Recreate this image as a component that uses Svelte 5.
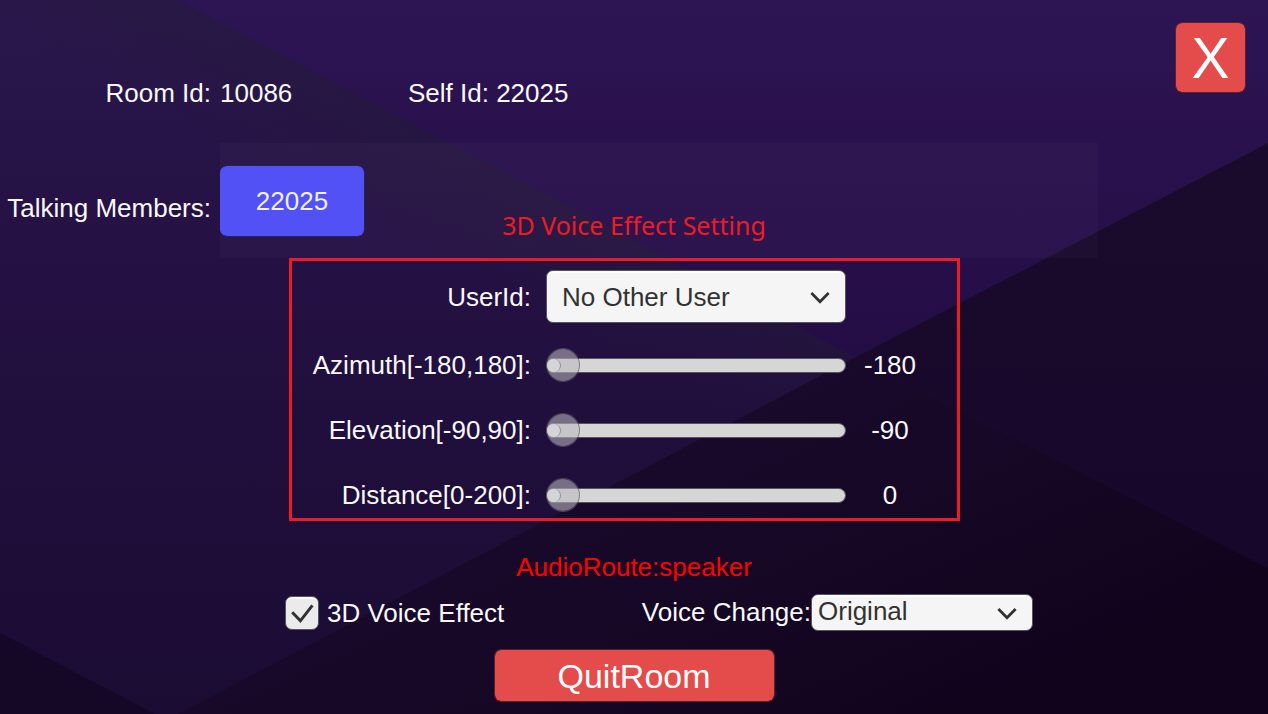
<script>
  const users = ['No Other User'];
  const voices = ['Original', 'Lolita', 'Uncle', 'Ethereal'];

  let user = $state('No Other User');
  let voice = $state('Original');
  let spatial = $state(true);
  let sliders = $state([
    { id: 'azimuth', label: 'Azimuth[-180,180]:', min: -180, max: 180, value: -180 },
    { id: 'elevation', label: 'Elevation[-90,90]:', min: -90, max: 90, value: -90 },
    { id: 'distance', label: 'Distance[0-200]:', min: 0, max: 200, value: 0 }
  ]);

  const share = (s) => (s.value - s.min) / (s.max - s.min);
</script>

{#snippet chevron()}
  <svg class="chevron" viewBox="0 0 20 14" aria-hidden="true">
    <path d="M1.4 2 L10 10.8 L18.6 2" fill="none" stroke="#323232" stroke-width="2.8" />
  </svg>
{/snippet}

<div class="page">
  <svg class="backdrop" viewBox="0 0 1268 714" preserveAspectRatio="none" aria-hidden="true">
    <defs>
      <linearGradient id="left" x1="0" y1="0" x2="0" y2="1">
        <stop offset="0" stop-color="#29174b" />
        <stop offset="0.35" stop-color="#251144" />
        <stop offset="0.7" stop-color="#1e0e39" />
        <stop offset="1" stop-color="#1b0c34" />
      </linearGradient>
      <linearGradient id="shade" gradientUnits="userSpaceOnUse" x1="480" y1="159" x2="430" y2="254">
        <stop offset="0" stop-color="#231a38" stop-opacity="0.4" />
        <stop offset="1" stop-color="#231a38" stop-opacity="0" />
      </linearGradient>
      <linearGradient id="top" x1="0" y1="0" x2="0" y2="1">
        <stop offset="0" stop-color="#2d1453" />
        <stop offset="1" stop-color="#240d45" />
      </linearGradient>
      <linearGradient id="right" x1="0" y1="0" x2="0" y2="1">
        <stop offset="0" stop-color="#1a0b2d" />
        <stop offset="1" stop-color="#17082b" />
      </linearGradient>
      <linearGradient id="bottom" gradientUnits="userSpaceOnUse" x1="800" y1="357" x2="960" y2="714">
        <stop offset="0" stop-color="#190a2c" />
        <stop offset="0.5" stop-color="#160725" />
        <stop offset="1" stop-color="#11031c" />
      </linearGradient>
    </defs>
    <rect width="1268" height="714" fill="url(#left)" />
    <path d="M178 0 L856 357 L700 439 L0 70 V0 Z" fill="url(#shade)" />
    <path d="M178 0 H1268 V143 L856 358 Z" fill="url(#top)" />
    <path d="M1268 143 V568 L856 357 Z" fill="url(#right)" />
    <path d="M856 357 L1268 568 V714 H178 Z" fill="url(#bottom)" />
    <path d="M0 633 L155 714 H0 Z" fill="#150726" />
  </svg>

  <header class="top">
    <span class="lead">Room Id:</span>
    <span class="room">10086</span>
    <span class="self">Self Id: 22025</span>
    <button class="close" type="button">X</button>
  </header>

  <main>
    <section class="talking">
      <span class="lead">Talking Members:</span>
      <div class="members">
        <button class="member" type="button">22025</button>
      </div>
      <h2 class="caption">3D Voice Effect Setting</h2>
    </section>

    <section class="settings">
      <div class="row first">
        <label for="user">UserId:</label>
        <div class="select large">
          <select id="user" bind:value={user}>
            {#each users as u}<option>{u}</option>{/each}
          </select>
          {@render chevron()}
        </div>
      </div>
      {#each sliders as s (s.id)}
        <div class="row">
          <label for={s.id}>{s.label}</label>
          <div class="slider">
            <span class="fill" style="width: calc(14px + (100% - 14px) * {share(s)})"></span>
            <input id={s.id} type="range" min={s.min} max={s.max} bind:value={s.value} />
          </div>
          <output for={s.id}>{s.value}</output>
        </div>
      {/each}
    </section>

    <p class="route">AudioRoute:speaker</p>

    <div class="options">
      <label class="check">
        <span class="box">
          <input type="checkbox" bind:checked={spatial} />
          {#if spatial}
            <svg viewBox="0 0 34 34" aria-hidden="true">
              <path d="M7.2 16.2 L15.4 24.8 L27.4 9.4" fill="none" stroke="#323232" stroke-width="3" />
            </svg>
          {/if}
        </span>
        3D Voice Effect
      </label>
      <div class="voice">
        <label for="voice">Voice Change:</label>
        <div class="select small">
          <select id="voice" bind:value={voice}>
            {#each voices as v}<option>{v}</option>{/each}
          </select>
          {@render chevron()}
        </div>
      </div>
    </div>

    <button class="quit" type="button">QuitRoom</button>
  </main>
</div>

<style>
  :global(body) {
    margin: 0;
    background: #150624;
  }

  .page {
    position: relative;
    isolation: isolate;
    box-sizing: border-box;
    min-height: 100vh;
    padding-bottom: 12px;
    color: #f8f8fa;
    font: 26px/30px "Liberation Sans", Arial, sans-serif;
  }

  .page * {
    box-sizing: border-box;
  }

  .backdrop {
    position: absolute;
    inset: 0;
    z-index: -1;
    width: 100%;
    height: 100%;
  }

  button,
  select {
    margin: 0;
    font: inherit;
    cursor: pointer;
  }

  button {
    padding: 0;
    border: 1px solid #5a2030;
    border-radius: 7px;
    background: #e44b4b;
    background-clip: padding-box;
    color: #fff;
  }

  .lead {
    flex: none;
    width: 220px;
    padding-right: 9px;
    text-align: right;
    white-space: nowrap;
  }

  .top {
    display: flex;
    align-items: flex-start;
    height: 143px;
    padding: 22px 22px 0 0;
  }

  .top span {
    margin-top: 56px;
  }

  .room {
    width: 188px;
  }

  .close {
    width: 71px;
    height: 71px;
    margin-left: auto;
    font-size: 57px;
    line-height: 68px;
  }

  main {
    display: flex;
    flex-direction: column;
    align-items: center;
  }

  .talking {
    display: grid;
    grid-template-columns: 220px 1fr 170px;
    align-self: stretch;
    height: 115px;
  }

  .talking .lead {
    grid-area: 1 / 1;
    align-self: center;
    padding-top: 14px;
  }

  .members {
    grid-area: 1 / 2;
    padding-top: 22px;
    background: rgba(255, 255, 255, 0.025);
  }

  .member {
    width: 145px;
    height: 72px;
    border-color: #262255;
    border-left: 0;
    background-color: #5151f5;
    color: #f0f0fe;
  }

  .caption {
    grid-area: 1 / 1 / 2 / 4;
    place-self: end center;
    margin: 0 0 17px;
    color: #ed1c24;
    font: 25px/32px "Noto Sans", "Open Sans", sans-serif;
  }

  .settings {
    display: flex;
    flex-direction: column;
    gap: 19px;
    width: 671px;
    max-width: 100%;
    margin-right: 19px;
    padding-top: 9px;
    border: 3px solid #ed1c24;
  }

  .row {
    display: grid;
    grid-template-columns: 1fr 300px 88px;
    align-items: center;
    height: 46px;
    margin-right: 23px;
  }

  .first {
    height: 53px;
  }

  .row > label {
    padding-right: 15px;
    text-align: right;
  }

  output {
    text-align: center;
  }

  .select {
    position: relative;
  }

  select {
    display: block;
    width: 100%;
    height: 100%;
    padding: 0 48px 0 15px;
    border: 1px solid #55555c;
    border-radius: 7px;
    background: #f5f5f5;
    box-shadow: inset 0 2px #fff;
    color: #323232;
    appearance: none;
  }

  .large {
    height: 53px;
  }

  .small {
    width: 222px;
    height: 37px;
  }

  .small select {
    padding: 0 48px 3px 6px;
  }

  .chevron {
    position: absolute;
    top: calc(50% - 6px);
    right: 16px;
    width: 20px;
    height: 14px;
    pointer-events: none;
  }

  .slider {
    position: relative;
    height: 15px;
    border: 1px solid #55555c;
    border-radius: 8px;
    background: #d6d6d6;
  }

  .fill {
    position: absolute;
    top: 0;
    left: 0;
    height: 13px;
    border-right: 1px solid #555;
    border-radius: 7px;
    background: #f8f8f8;
  }

  .slider input {
    position: absolute;
    top: -11px;
    left: -1px;
    width: calc(100% + 2px);
    height: 34px;
    margin: 0;
    background: transparent;
    appearance: none;
  }

  .slider input::-webkit-slider-thumb {
    width: 34px;
    height: 34px;
    border: 1px solid rgba(90, 84, 98, 0.7);
    border-radius: 50%;
    background: rgba(186, 184, 190, 0.57);
    background-clip: padding-box;
    appearance: none;
  }

  .route {
    margin: 31px 0 12px;
    color: #f00;
  }

  .options {
    display: flex;
    justify-content: space-between;
    width: 748px;
    max-width: 100%;
    margin-left: 50px;
  }

  .check,
  .voice {
    display: flex;
    align-items: center;
  }

  .check {
    gap: 8px;
  }

  .voice label {
    padding-bottom: 2px;
  }

  .box {
    position: relative;
    width: 34px;
    height: 34px;
  }

  .box input {
    display: block;
    width: 34px;
    height: 34px;
    margin: 0;
    border: 1px solid #55555c;
    border-radius: 7px;
    background: #ebebeb;
    box-shadow: inset 0 2px #f8f8f8;
    appearance: none;
  }

  .box svg {
    position: absolute;
    inset: 0;
    pointer-events: none;
  }

  .quit {
    width: 281px;
    height: 53px;
    margin-top: 18px;
    font-size: 34px;
  }
</style>
